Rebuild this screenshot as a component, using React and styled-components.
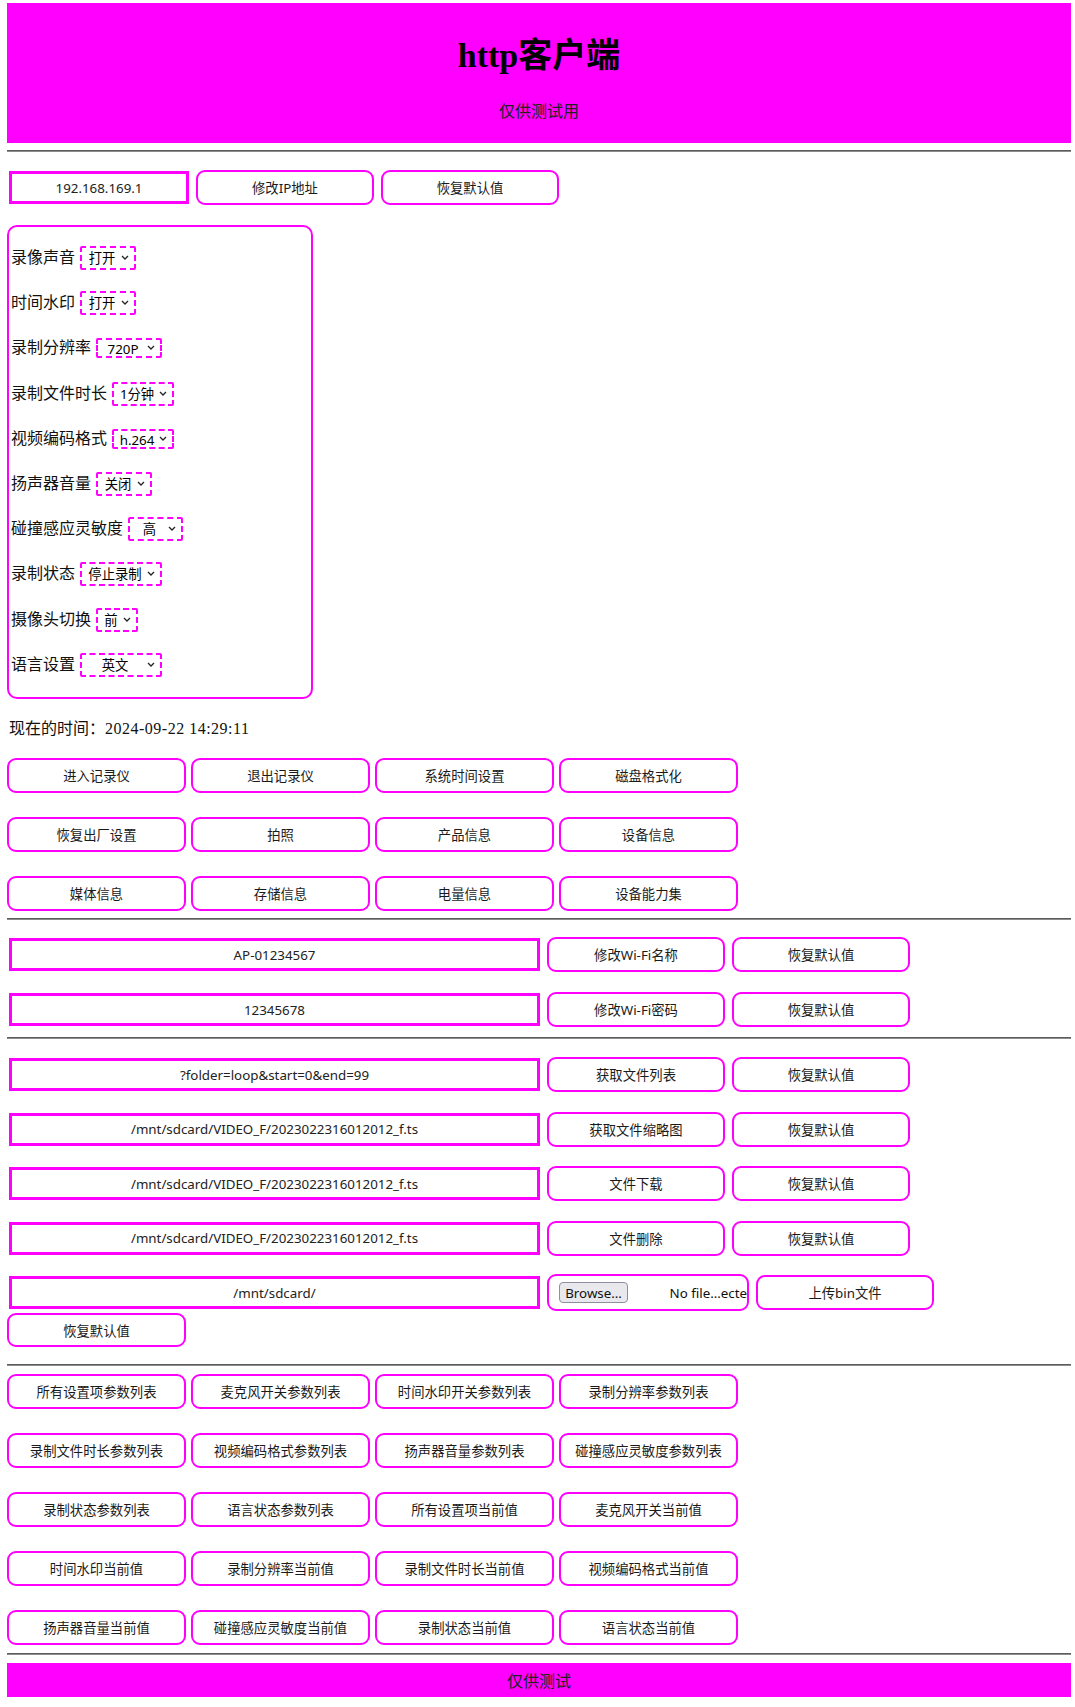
import React from "react";
import styled, { createGlobalStyle } from "styled-components";

const GlobalStyle = createGlobalStyle`
  html, body {
    margin: 0;
    padding: 0;
    background: #fff;
  }
  body {
    font-family: "Liberation Serif", "Noto Sans CJK SC", serif;
    font-size: 16px;
    color: #000;
  }
`;

const SETTINGS = [
  { label: "录像声音", value: "打开", w: 56 },
  { label: "时间水印", value: "打开", w: 56 },
  { label: "录制分辨率", value: "720P", w: 66, compact: true },
  { label: "录制文件时长", value: "1分钟", w: 62 },
  { label: "视频编码格式", value: "h.264", w: 62, compact: true },
  { label: "扬声器音量", value: "关闭", w: 56 },
  { label: "碰撞感应灵敏度", value: "高", w: 55 },
  { label: "录制状态", value: "停止录制", w: 82 },
  { label: "摄像头切换", value: "前", w: 42 },
  { label: "语言设置", value: "英文", w: 82 },
];

const DEVICE_ACTIONS = [
  "进入记录仪", "退出记录仪", "系统时间设置", "磁盘格式化",
  "恢复出厂设置", "拍照", "产品信息", "设备信息",
  "媒体信息", "存储信息", "电量信息", "设备能力集",
];

const WIFI_ROWS = [
  { value: "AP-01234567", action: "修改Wi-Fi名称" },
  { value: "12345678", action: "修改Wi-Fi密码" },
];

const FILE_ROWS = [
  { value: "?folder=loop&start=0&end=99", action: "获取文件列表" },
  { value: "/mnt/sdcard/VIDEO_F/2023022316012012_f.ts", action: "获取文件缩略图" },
  { value: "/mnt/sdcard/VIDEO_F/2023022316012012_f.ts", action: "文件下载" },
  { value: "/mnt/sdcard/VIDEO_F/2023022316012012_f.ts", action: "文件删除" },
];

const PARAM_ACTIONS = [
  "所有设置项参数列表", "麦克风开关参数列表", "时间水印开关参数列表", "录制分辨率参数列表",
  "录制文件时长参数列表", "视频编码格式参数列表", "扬声器音量参数列表", "碰撞感应灵敏度参数列表",
  "录制状态参数列表", "语言状态参数列表", "所有设置项当前值", "麦克风开关当前值",
  "时间水印当前值", "录制分辨率当前值", "录制文件时长当前值", "视频编码格式当前值",
  "扬声器音量当前值", "碰撞感应灵敏度当前值", "录制状态当前值", "语言状态当前值",
];

export default function App() {
  return (
    <>
      <GlobalStyle />
      <Page>
        <Header>
          <Title>http客户端</Title>
          <Subtitle>仅供测试用</Subtitle>
        </Header>

        <Rule $top={7} />

        <Row $top={18}>
          <TextField $w={180} defaultValue="192.168.169.1" />
          <Button>修改IP地址</Button>
          <Button>恢复默认值</Button>
        </Row>

        <Panel>
          {SETTINGS.map((s) => (
            <SettingRow key={s.label}>
              <SettingLabel>{s.label}</SettingLabel>
              <SelectWrap>
                <Select $w={s.w} $h={s.compact ? 20 : 24} defaultValue={s.value}>
                  <option>{s.value}</option>
                </Select>
                <Chevron viewBox="0 0 8 5">
                  <path d="M1 1 L4 4 L7 1" fill="none" stroke="#222" strokeWidth="1.3" />
                </Chevron>
              </SelectWrap>
            </SettingRow>
          ))}
        </Panel>

        <Clock>
          现在的时间：<ClockValue>2024-09-22 14:29:11</ClockValue>
        </Clock>

        <ButtonGrid $top={20}>
          {DEVICE_ACTIONS.map((t) => (
            <Button key={t} $w={179}>{t}</Button>
          ))}
        </ButtonGrid>

        <Rule $top={7} />

        {WIFI_ROWS.map((r, i) => (
          <Row key={r.action} $top={i === 0 ? 17 : 20}>
            <TextField $w={531} defaultValue={r.value} />
            <Button>{r.action}</Button>
            <Button>恢复默认值</Button>
          </Row>
        ))}

        <Rule $top={10} />

        {FILE_ROWS.map((r, i) => (
          <Row key={r.action} $top={i === 0 ? 18 : 19.5}>
            <TextField $w={531} defaultValue={r.value} />
            <Button>{r.action}</Button>
            <Button>恢复默认值</Button>
          </Row>
        ))}

        <Row $top={19.5}>
          <TextField $w={531} defaultValue="/mnt/sdcard/" />
          <FilePicker>
            <BrowseButton>Browse…</BrowseButton>
            <FileName>No file…ecte</FileName>
          </FilePicker>
          <Button>上传bin文件</Button>
        </Row>

        <Row $top={3} $h={34}>
          <Button $w={179} $h={34}>恢复默认值</Button>
        </Row>

        <Rule $top={17} />

        <ButtonGrid $top={8}>
          {PARAM_ACTIONS.map((t) => (
            <Button key={t} $w={179}>{t}</Button>
          ))}
        </ButtonGrid>

        <Rule $top={8} />

        <Footer>仅供测试</Footer>
      </Page>
    </>
  );
}

const Page = styled.div`
  display: flex;
  flex-direction: column;
  align-items: stretch;
  padding: 3px 4px 10px 7px;
`;

const Header = styled.header`
  box-sizing: border-box;
  height: 140px;
  padding-top: 33px;
  background: #ff00ff;
  display: flex;
  flex-direction: column;
  align-items: center;
`;

const Title = styled.h1`
  margin: 0;
  font-size: 34px;
  line-height: 40px;
  font-weight: bold;
  color: #000;
`;

const Subtitle = styled.p`
  margin: 26px 0 0;
  font-size: 16px;
  line-height: 19px;
  color: #222;
`;

const Rule = styled.hr`
  margin: ${(p) => p.$top}px 0 0;
  height: 0;
  border: 0;
  border-top: 1px solid #5c5c5c;
  border-bottom: 1px solid #8c8c8c;
`;

const Row = styled.div`
  display: flex;
  align-items: center;
  gap: 7px;
  height: ${(p) => p.$h || 35}px;
  margin-top: ${(p) => p.$top || 0}px;
`;

const TextField = styled.input`
  box-sizing: border-box;
  width: ${(p) => p.$w}px;
  height: 33px;
  margin: 0 0 0 2px;
  padding: 0 4px;
  border: 3px solid #ff00ff;
  border-radius: 0;
  background: #fff;
  color: #222;
  text-align: center;
  font: 13.33px "Noto Sans", "Noto Sans CJK SC", sans-serif;
  outline: none;
`;

const Button = styled.button`
  box-sizing: border-box;
  flex: none;
  width: ${(p) => p.$w || 178}px;
  height: ${(p) => p.$h || 35}px;
  margin: 0;
  padding: 0;
  border: 2px solid #ff00ff;
  border-radius: 9px;
  background: #fff;
  color: #1a1a1a;
  font: 13.33px "Noto Sans", "Noto Sans CJK SC", sans-serif;
  cursor: pointer;
`;

const ButtonGrid = styled.div`
  display: grid;
  grid-template-columns: repeat(4, 179px);
  grid-auto-rows: 35px;
  column-gap: 5px;
  row-gap: 24px;
  margin-top: ${(p) => p.$top}px;
`;

const Panel = styled.section`
  box-sizing: border-box;
  width: 306px;
  height: 474px;
  margin-top: 20px;
  padding: 19px 0 0 2px;
  border: 2px solid #ff00ff;
  border-radius: 10px;
  display: flex;
  flex-direction: column;
  gap: 21.2px;
`;

const SettingRow = styled.div`
  display: flex;
  align-items: center;
  height: 24px;
`;

const SettingLabel = styled.label`
  margin-right: 5px;
  font-size: 16px;
  line-height: 24px;
  color: #111;
`;

const SelectWrap = styled.span`
  position: relative;
  display: inline-flex;
`;

const Select = styled.select`
  appearance: none;
  -webkit-appearance: none;
  box-sizing: border-box;
  width: ${(p) => p.$w}px;
  height: ${(p) => p.$h}px;
  margin: 0;
  padding: 0 14px 0 2px;
  border: 2px dashed #ff00ff;
  border-radius: 2px;
  background: #fff;
  color: #000;
  font: 13.33px "Noto Sans", "Noto Sans CJK SC", sans-serif;
  text-align: center;
  text-align-last: center;
  outline: none;
`;

const Chevron = styled.svg`
  position: absolute;
  right: 7px;
  top: 50%;
  width: 8px;
  height: 5px;
  margin-top: -3px;
  pointer-events: none;
`;

const Clock = styled.p`
  margin: 20px 0 0 2px;
  font-size: 16px;
  line-height: 19px;
  color: #111;
`;

const ClockValue = styled.span`
  letter-spacing: 0.5px;
`;

const FilePicker = styled.div`
  box-sizing: border-box;
  flex: none;
  width: 202px;
  height: 37px;
  padding-left: 10px;
  border: 2px solid #ff00ff;
  border-radius: 9px;
  display: flex;
  align-items: center;
  overflow: hidden;
  white-space: nowrap;
`;

const BrowseButton = styled.span`
  box-sizing: border-box;
  flex: none;
  width: 69px;
  height: 21px;
  border: 1px solid #8f8f9d;
  border-radius: 4px;
  background: #e9e9ed;
  color: #111;
  display: flex;
  align-items: center;
  justify-content: center;
  font: 13.33px "Noto Sans", sans-serif;
`;

const FileName = styled.span`
  flex: none;
  margin-left: auto;
  color: #111;
  font: 13.33px "Noto Sans", sans-serif;
`;

const Footer = styled.footer`
  height: 34px;
  margin-top: 8px;
  background: #ff00ff;
  display: flex;
  align-items: center;
  justify-content: center;
  font-size: 16px;
  color: #222;
`;
